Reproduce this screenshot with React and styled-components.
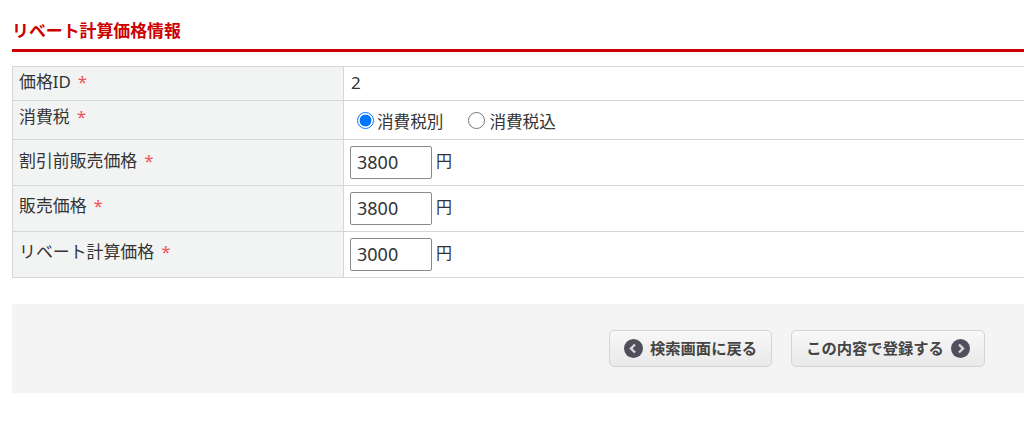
import React from "react";
import styled, { createGlobalStyle } from "styled-components";

const Global = createGlobalStyle`
  html, body { margin: 0; padding: 0; background: #fff; overflow: hidden; }
  body { font-family: "Noto Sans", "Noto Sans CJK JP", sans-serif; color: #333; width: 1024px; height: 428px; }
`;
const Page = styled.div`
  padding: 20px 0 0 12px;
  width: 1012px;
  overflow: hidden;
`;
const Title = styled.h2`
  margin: 0;
  height: 29px;
  line-height: 21px;
  font-size: 16.9px;
  font-weight: 700;
  color: #cc0000;
  border-bottom: 3px solid #cc0000;
  box-sizing: content-box;
  width: 1012px;
`;
const Table = styled.div`
  margin-top: 14px;
  width: 1030px;
  border-top: 1px solid #d6d6d6;
  border-left: 1px solid #d6d6d6;
`;
const Row = styled.div`
  display: grid;
  grid-template-columns: 331px 1fr;
  height: ${p => p.$h}px;
  box-sizing: border-box;
  border-bottom: 1px solid #d6d6d6;
`;
const Label = styled.div`
  background: #f2f4f4;
  border-right: 1px solid #d6d6d6;
  padding: ${p => p.$top}px 0 0 6px;
  font-size: 16.9px;
  line-height: 22px;
  color: #333;
`;
const Star = styled.span`
  color: #f0535a;
  margin-left: 7px;
`;
const Value = styled.div`
  display: flex;
  align-items: center;
  padding-left: 6px;
  font-size: 16px;
  color: #333;
`;
const Plain = styled.span`
  font-size: 17px;
  margin-bottom: 2px;
  padding-left: 1px;
`;
const Unit = styled.span`
  font-size: 16px;
  line-height: 22px;
  margin-bottom: 3px;
`;
const RadioGroup = styled.div`
  display: flex;
  align-items: center;
  padding: 3px 0 0 13px;
`;
const RadioLabel = styled.label`
  display: flex;
  align-items: center;
  margin-left: ${p => p.$ml}px;
  gap: ${p => p.$gap}px;
  font-size: 16.6px;
  line-height: 22px;
`;
const Radio = styled.input`
  appearance: none;
  width: 17px;
  height: 17px;
  margin: 0 0 2px 0;
  box-sizing: border-box;
  border-radius: 50%;
  border: 1px solid ${p => (p.checked ? "#0075ff" : "#767676")};
  background: ${p => (p.checked ? "radial-gradient(circle, #0075ff 0 5.6px, #fff 6.2px)" : "#fff")};
`;
const Amount = styled.input`
  width: 82px;
  height: 33px;
  box-sizing: border-box;
  padding: 0 0 2px 6px;
  border: 1px solid #8a8a8a;
  border-radius: 2px;
  background: #fff;
  font: 18px "Noto Sans", sans-serif;
  color: #333;
  margin-right: 4px;
`;
const Footer = styled.div`
  margin-top: 26px;
  height: 89px;
  width: 1012px;
  background: #f4f4f4;
  display: flex;
  align-items: flex-start;
  justify-content: flex-end;
  padding: 26px 39px 0 0;
  box-sizing: border-box;
  gap: 19px;
`;
const Button = styled.button`
  height: 37px;
  width: ${p => p.$w}px;
  display: flex;
  align-items: center;
  justify-content: center;
  gap: 7px;
  padding: 0;
  border: 1px solid #d3d3dc;
  border-radius: 5px;
  background: linear-gradient(#f8f8f8, #e9e9e9);
  font: 700 15.3px "Noto Sans CJK JP", sans-serif;
  color: #444;
`;
const ButtonText = styled.span`
  margin-bottom: 4px;
`;
const Arrow = ({ dir }) => (
  <svg width="19" height="19" viewBox="0 0 19 19">
    <circle cx="9.5" cy="9.5" r="9.5" fill="#50505c" />
    <path
      d={dir === "left" ? "M11 5.5 7 9.5l4 4" : "M8 5.5l4 4-4 4"}
      fill="none"
      stroke="#d8d8de"
      strokeWidth="2.4"
    />
  </svg>
);

export default function App() {
  return (
    <Page>
      <Global />
      <Title>リベート計算価格情報</Title>
      <Table>
        <Row $h={34}>
          <Label $top={4}>価格ID<Star>*</Star></Label>
          <Value><Plain>2</Plain></Value>
        </Row>
        <Row $h={39}>
          <Label $top={5}>消費税<Star>*</Star></Label>
          <RadioGroup>
            <RadioLabel $ml={0} $gap={3}><Radio type="radio" name="tax" checked readOnly />消費税別</RadioLabel>
            <RadioLabel $ml={25} $gap={4}><Radio type="radio" name="tax" readOnly />消費税込</RadioLabel>
          </RadioGroup>
        </Row>
        <Row $h={46}>
          <Label $top={10}>割引前販売価格<Star>*</Star></Label>
          <Value><Amount defaultValue="3800" /><Unit>円</Unit></Value>
        </Row>
        <Row $h={46}>
          <Label $top={9}>販売価格<Star>*</Star></Label>
          <Value><Amount defaultValue="3800" /><Unit>円</Unit></Value>
        </Row>
        <Row $h={46}>
          <Label $top={9}>リベート計算価格<Star>*</Star></Label>
          <Value><Amount defaultValue="3000" /><Unit>円</Unit></Value>
        </Row>
      </Table>
      <Footer>
        <Button $w={163}><Arrow dir="left" /><ButtonText>検索画面に戻る</ButtonText></Button>
        <Button $w={194}><ButtonText>この内容で登録する</ButtonText><Arrow dir="right" /></Button>
      </Footer>
    </Page>
  );
}
